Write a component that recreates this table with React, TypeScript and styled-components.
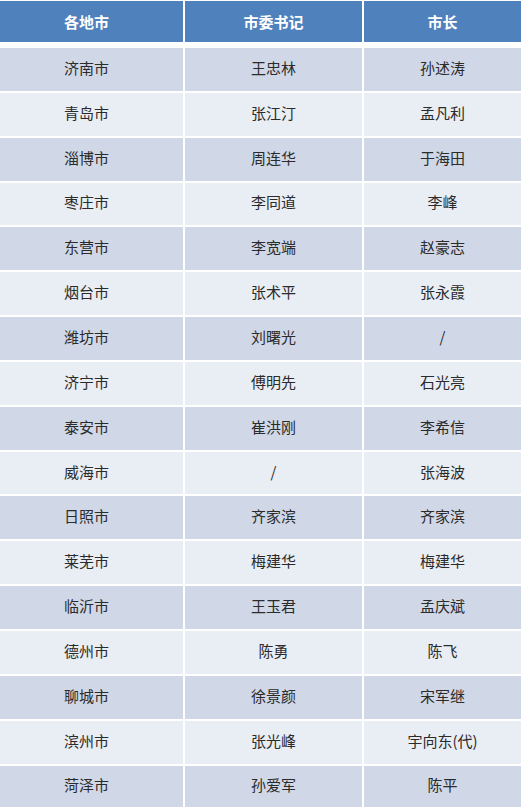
import styled, { createGlobalStyle } from "styled-components";

const GlobalStyle = createGlobalStyle`
  html, body {
    margin: 0;
    padding: 0;
    background: #ffffff;
  }
  body {
    font-family: "Noto Sans CJK SC", "Noto Sans", sans-serif;
  }
`;

const rows: [string, string, string][] = [
  ["济南市", "王忠林", "孙述涛"],
  ["青岛市", "张江汀", "孟凡利"],
  ["淄博市", "周连华", "于海田"],
  ["枣庄市", "李同道", "李峰"],
  ["东营市", "李宽端", "赵豪志"],
  ["烟台市", "张术平", "张永霞"],
  ["潍坊市", "刘曙光", "/"],
  ["济宁市", "傅明先", "石光亮"],
  ["泰安市", "崔洪刚", "李希信"],
  ["威海市", "/", "张海波"],
  ["日照市", "齐家滨", "齐家滨"],
  ["莱芜市", "梅建华", "梅建华"],
  ["临沂市", "王玉君", "孟庆斌"],
  ["德州市", "陈勇", "陈飞"],
  ["聊城市", "徐景颜", "宋军继"],
  ["滨州市", "张光峰", "宇向东(代)"],
  ["菏泽市", "孙爱军", "陈平"],
];

const Table = styled.div`
  display: flex;
  flex-direction: column;
  gap: 2px;
  padding-top: 1px;
  width: 521px;
  height: 807px;
  overflow: hidden;
`;

const Row = styled.div<{ $header?: boolean }>`
  display: grid;
  grid-template-columns: 183px 177px 1fr;
  column-gap: 2px;
  flex: none;
  height: ${({ $header }) => ($header ? "41px" : "42.85px")};
  margin-bottom: ${({ $header }) => ($header ? "4px" : "0")};
`;

const Cell = styled.div<{ $tone: "head" | "dark" | "light" }>`
  display: flex;
  align-items: center;
  justify-content: center;
  padding-bottom: ${({ $tone }) => ($tone === "head" ? "0" : "4px")};
  font-size: 15px;
  font-weight: ${({ $tone }) => ($tone === "head" ? 700 : 400)};
  color: ${({ $tone }) => ($tone === "head" ? "#ffffff" : "#2b2b2b")};
  background: ${({ $tone }) =>
    $tone === "head" ? "#4f81bd" : $tone === "dark" ? "#d0d8e8" : "#e9edf4"};

  &:first-child {
    padding-right: 10px;
  }
`;

const App = () => {
  return (
    <>
      <GlobalStyle />
      <Table>
        <Row $header>
          <Cell $tone="head">各地市</Cell>
          <Cell $tone="head">市委书记</Cell>
          <Cell $tone="head">市长</Cell>
        </Row>
        {rows.map((r, i) => (
          <Row key={r[0]}>
            {r.map((text, j) => (
              <Cell key={j} $tone={i % 2 === 0 ? "dark" : "light"}>
                {text}
              </Cell>
            ))}
          </Row>
        ))}
      </Table>
    </>
  );
};

export default App;
